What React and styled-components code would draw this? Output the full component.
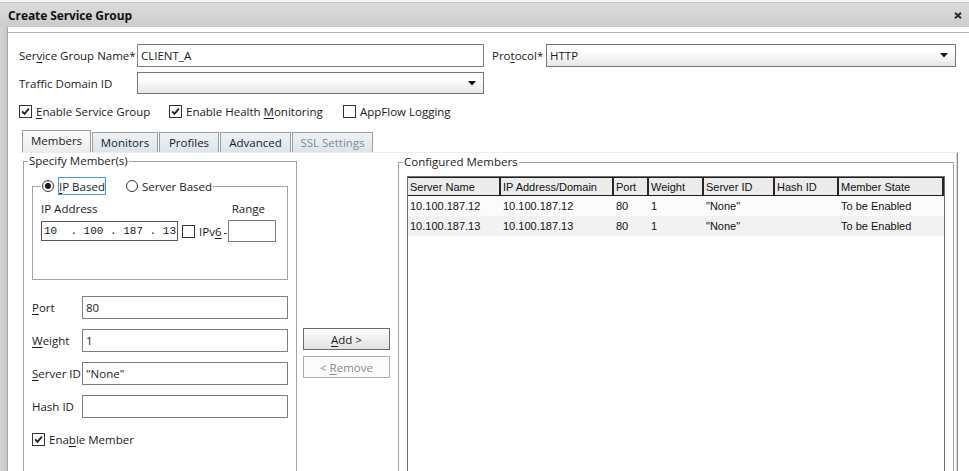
import React from 'react';
import styled, { createGlobalStyle } from 'styled-components';

const GlobalStyle = createGlobalStyle`
  html, body {
    margin: 0;
    padding: 0;
    background: #fff;
    overflow: hidden;
  }
  body {
    font-family: "Open Sans", "Noto Sans", sans-serif;
    font-size: 11.5px;
    color: #1a1a1a;
  }
  * { box-sizing: border-box; }
`;

const members = [
  { name: '10.100.187.12', ip: '10.100.187.12', port: '80', weight: '1', serverId: '"None"', hashId: '', state: 'To be Enabled' },
  { name: '10.100.187.13', ip: '10.100.187.13', port: '80', weight: '1', serverId: '"None"', hashId: '', state: 'To be Enabled' },
];

const columns = [
  { key: 'name', label: 'Server Name', w: 93 },
  { key: 'ip', label: 'IP Address/Domain', w: 113 },
  { key: 'port', label: 'Port', w: 35 },
  { key: 'weight', label: 'Weight', w: 55 },
  { key: 'serverId', label: 'Server ID', w: 71 },
  { key: 'hashId', label: 'Hash ID', w: 64 },
  { key: 'state', label: 'Member State', w: 105 },
];

const tabs = [
  { label: 'Members', w: 69, active: true },
  { label: 'Monitors', w: 66 },
  { label: 'Profiles', w: 60 },
  { label: 'Advanced', w: 71 },
  { label: 'SSL Settings', w: 81, disabled: true },
];

const Check = ({ checked }) => (
  <CheckBox>
    {checked && (
      <svg width="9" height="9" viewBox="0 0 9 9">
        <path d="M1.2 4.4 L3.5 6.9 L7.9 1.6" fill="none" stroke="#1e1e1e" strokeWidth="1.8" />
      </svg>
    )}
  </CheckBox>
);

const Arrow = () => (
  <svg width="8" height="5" viewBox="0 0 8 5">
    <path d="M0 0 H8 L4 4.6 Z" fill="#111" />
  </svg>
);

const App = () => {
  return (
    <>
      <GlobalStyle />
      <Window>
        <TopStrip />
        <TitleBar>
          <TitleText>Create Service Group</TitleText>
          <svg width="8" height="7" viewBox="0 0 8 7">
            <path d="M1 0.8 L7 6.2 M7 0.8 L1 6.2" stroke="#2b2b2b" strokeWidth="2" />
          </svg>
        </TitleBar>
        <Body>
          <SideStrip />
          <Main>
            <Sheet>
              <FieldRow h={23}>
                <FieldLabel w={118}>Ser<u>v</u>ice Group Name*</FieldLabel>
                <TextBox w={347}>CLIENT_A</TextBox>
                <FieldLabel w={54} gap={8}>Pro<u>t</u>ocol*</FieldLabel>
                <ComboBox w={410}>
                  <span>HTTP</span>
                  <Arrow />
                </ComboBox>
              </FieldRow>
              <FieldRow h={22} top={5}>
                <FieldLabel w={118}>Traffic Domain ID</FieldLabel>
                <ComboBox w={347}>
                  <span />
                  <Arrow />
                </ComboBox>
              </FieldRow>
              <CheckRow>
                <CheckItem w={150}><Check checked /><span><u>E</u>nable Service Group</span></CheckItem>
                <CheckItem w={174}><Check checked /><span>Enable Health <u>M</u>onitoring</span></CheckItem>
                <CheckItem><Check /><span>AppFlow Logging</span></CheckItem>
              </CheckRow>

              <TabStrip>
                {tabs.map(t => (
                  <Tab key={t.label} w={t.w} $active={t.active} $disabled={t.disabled}>{t.label}</Tab>
                ))}
              </TabStrip>
              <TabPanel>
                <GroupBox w={274} h={340}>
                  <GroupTitle>Specify Member(s)</GroupTitle>
                  <SubGroup>
                    <RadioLegend>
                      <Radio $on />
                      <FocusLabel><u>I</u>P Based</FocusLabel>
                      <Radio style={{ marginLeft: 16 }} />
                      <span>Server Based</span>
                    </RadioLegend>
                    <AddressHead>
                      <span>IP Address</span>
                      <span>Ran<u>g</u>e</span>
                    </AddressHead>
                    <AddressLine>
                      <IpBox>10  . 100 . 187 . 13</IpBox>
                      <Check />
                      <span>IPv<u>6</u></span>
                      <Dash>-</Dash>
                      <RangeBox />
                    </AddressLine>
                  </SubGroup>
                  <MemberForm>
                    <FormLine><FormLabel><u>P</u>ort</FormLabel><TextBox w={206} h={23}>80</TextBox></FormLine>
                    <FormLine><FormLabel><u>W</u>eight</FormLabel><TextBox w={206} h={23}>1</TextBox></FormLine>
                    <FormLine><FormLabel><u>S</u>erver ID</FormLabel><TextBox w={206} h={23}>"None"</TextBox></FormLine>
                    <FormLine><FormLabel>Hash ID</FormLabel><TextBox w={206} h={23} /></FormLine>
                    <CheckItem style={{ marginTop: 4 }}><Check checked /><span>Ena<u>b</u>le Member</span></CheckItem>
                  </MemberForm>
                </GroupBox>

                <ButtonColumn>
                  <PushButton><u>A</u>dd &gt;</PushButton>
                  <PushButton disabled>&lt; <u>R</u>emove</PushButton>
                </ButtonColumn>

                <GroupBox w={556} h={340} top={1}>
                  <GroupTitle>Configured Members</GroupTitle>
                  <ListView>
                    <HeaderRow>
                      {columns.map(c => (
                        <HeaderCell key={c.key} w={c.w}>{c.label}</HeaderCell>
                      ))}
                    </HeaderRow>
                    {members.map((m, i) => (
                      <Row key={m.name} $alt={i % 2 === 1}>
                        {columns.map(c => (
                          <Cell key={c.key} w={c.w}>{m[c.key]}</Cell>
                        ))}
                      </Row>
                    ))}
                  </ListView>
                </GroupBox>
              </TabPanel>
            </Sheet>
          </Main>
        </Body>
      </Window>
    </>
  );
};

const Window = styled.div`
  width: 969px;
  height: 471px;
  overflow: hidden;
  display: flex;
  flex-direction: column;
  background: #fff;

  u {
    text-decoration: underline;
    text-underline-offset: 2px;
  }
`;

const TopStrip = styled.div`
  flex: none;
  height: 3px;
  background: #f4f4f4;
  border-bottom: 1px solid #c4c4c4;
`;

const TitleBar = styled.div`
  flex: none;
  height: 24px;
  display: flex;
  align-items: center;
  justify-content: space-between;
  padding: 0 7px 0 8px;
  background: linear-gradient(#dcdcdc, #cbcbcb);
`;

const TitleText = styled.span`
  font-weight: 700;
  font-size: 12px;
  color: #111;
  letter-spacing: -0.1px;
`;

const Body = styled.div`
  flex: 1;
  display: flex;
  min-height: 0;
`;

const SideStrip = styled.div`
  flex: none;
  width: 8px;
  background: linear-gradient(90deg, #d6d6d6, #c8c8c8);
  border-right: 1px solid #a6a6a6;
`;

const Main = styled.div`
  flex: 1;
  padding-top: 5px;
  display: flex;
  flex-direction: column;
`;

const Sheet = styled.div`
  flex: 1;
  border-top: 1px solid #b4b4b4;
  padding: 11px 11px 0 11px;
  display: flex;
  flex-direction: column;
`;

const FieldRow = styled.div`
  display: flex;
  align-items: center;
  height: ${p => p.h}px;
  margin-top: ${p => p.top || 0}px;
`;

const FieldLabel = styled.span`
  flex: none;
  width: ${p => p.w}px;
  margin-left: ${p => p.gap || 0}px;
  white-space: nowrap;
`;

const TextBox = styled.div`
  flex: none;
  width: ${p => p.w}px;
  height: ${p => p.h || 23}px;
  border: 1px solid #7e7e7e;
  background: #fff;
  padding: 0 3px;
  display: flex;
  align-items: center;
  white-space: nowrap;
`;

const Dash = styled.span`
  margin-left: -2px;
`;

const RangeBox = styled.div`
  flex: none;
  width: 48px;
  height: 22px;
  margin-left: -3px;
  border: 1px solid #7e7e7e;
  background: #fff;
`;

const ComboBox = styled.div`
  flex: none;
  width: ${p => p.w}px;
  height: 100%;
  border: 1px solid #767676;
  background: linear-gradient(#ffffff 30%, #e6e6e6);
  padding: 0 7px 0 3px;
  display: flex;
  align-items: center;
  justify-content: space-between;
`;

const CheckRow = styled.div`
  display: flex;
  align-items: center;
  height: 14px;
  margin-top: 10px;
`;

const CheckItem = styled.label`
  flex: none;
  display: flex;
  align-items: center;
  gap: 4px;
  width: ${p => (p.w ? `${p.w}px` : 'auto')};
  white-space: nowrap;
`;

const CheckBox = styled.span`
  flex: none;
  width: 13px;
  height: 13px;
  border: 1px solid #333;
  background: #fff;
  display: flex;
  align-items: center;
  justify-content: center;
`;

const TabStrip = styled.div`
  display: flex;
  align-items: flex-end;
  height: 22px;
  margin-top: 12px;
  padding-left: 3px;
  gap: 1px;
`;

const Tab = styled.div`
  flex: none;
  width: ${p => p.w}px;
  height: ${p => (p.$active ? 22 : 20)}px;
  border: 1px solid #9c9c9c;
  border-bottom: none;
  display: flex;
  align-items: ${p => (p.$active ? 'flex-start' : 'center')};
  padding-top: ${p => (p.$active ? 2 : 0)}px;
  justify-content: center;
  color: ${p => (p.$disabled ? '#8a8a8a' : '#1a1a1a')};
  background: ${p => (p.$active
    ? 'linear-gradient(#fbfbfb, #ececec)'
    : 'linear-gradient(#eef2f5, #dde4ea)')};
`;

const TabPanel = styled.div`
  flex: 1;
  display: flex;
  align-items: flex-start;
  margin-left: 1px;
  padding: 0 0 0 3px;
  border-top: 1px solid #ececec;
  border-right: 1px solid #8c8c8c;
  box-shadow: inset -1px 0 #d8d8d8;
  overflow: hidden;
`;

const GroupBox = styled.fieldset`
  flex: none;
  margin: ${p => p.top || 0}px 0 0 0;
  padding: 0 8px;
  width: ${p => p.w}px;
  height: ${p => p.h}px;
  min-width: 0;
  border: 1px solid #a3a3a3;
`;

const GroupTitle = styled.legend`
  margin-left: -4px;
  padding: 0 1px;
  line-height: 16px;
`;

const SubGroup = styled.fieldset`
  margin: 8px 0 0 0;
  padding: 0 8px;
  height: 103px;
  min-width: 0;
  border: 1px solid #a3a3a3;
`;

const RadioLegend = styled.legend`
  padding: 0 1px;
  height: 18px;
  display: flex;
  align-items: center;
  gap: 4px;
  white-space: nowrap;
`;

const Radio = styled.span`
  flex: none;
  width: 12px;
  height: 12px;
  border-radius: 50%;
  border: 1px solid #333;
  background: #fff;
  display: flex;
  align-items: center;
  justify-content: center;

  &::after {
    content: '';
    width: 6px;
    height: 6px;
    border-radius: 50%;
    background: ${p => (p.$on ? '#1a1a1a' : 'transparent')};
  }
`;

const FocusLabel = styled.span`
  height: 18px;
  padding: 0;
  border: 1px solid #3c9bf0;
  display: flex;
  align-items: center;
`;

const AddressHead = styled.div`
  display: flex;
  justify-content: space-between;
  margin-top: 7px;
  padding-right: 14px;
  line-height: 14px;
`;

const AddressLine = styled.div`
  display: flex;
  align-items: center;
  gap: 4px;
  margin-top: 4px;
`;

const IpBox = styled.div`
  flex: none;
  width: 137px;
  height: 20px;
  border: 1px solid #555;
  padding: 0 2px;
  font-family: "Liberation Mono", monospace;
  font-size: 11px;
  white-space: pre;
  display: flex;
  align-items: center;
`;

const MemberForm = styled.div`
  display: flex;
  flex-direction: column;
  gap: 10px;
  margin-top: 16px;
`;

const FormLine = styled.div`
  display: flex;
  align-items: center;
`;

const FormLabel = styled.span`
  flex: none;
  width: 50px;
  white-space: nowrap;
`;

const ButtonColumn = styled.div`
  flex: none;
  width: 101px;
  padding: 175px 0 0 6px;
  display: flex;
  flex-direction: column;
  gap: 6px;
`;

const PushButton = styled.button`
  width: 87px;
  height: 22px;
  padding: 0;
  font: inherit;
  color: ${p => (p.disabled ? '#8a8a8a' : '#1a1a1a')};
  border: 1px solid ${p => (p.disabled ? '#adadad' : '#6a6a6a')};
  background: ${p => (p.disabled ? '#fbfbfb' : 'linear-gradient(#fdfdfd, #e2e2e2)')};
`;

const ListView = styled.div`
  margin-top: 6px;
  height: 300px;
  border: 1px solid #6e6e6e;
  font-family: "Liberation Sans", Arial, sans-serif;
  font-size: 11px;
  color: #111;
`;

const HeaderRow = styled.div`
  display: flex;
  height: 19px;
  background: #ebebeb;
  border-top: 1px solid #1f1f1f;
  border-bottom: 1px solid #1f1f1f;
`;

const HeaderCell = styled.div`
  flex: none;
  width: ${p => p.w}px;
  padding-left: 2px;
  display: flex;
  align-items: center;
  border-right: 2px solid #262626;
  white-space: nowrap;
  overflow: hidden;
`;

const Row = styled.div`
  display: flex;
  height: 20px;
  background: ${p => (p.$alt ? '#f2f2f2' : '#fbfbfb')};
`;

const Cell = styled.div`
  flex: none;
  width: ${p => p.w}px;
  padding-left: 2px;
  display: flex;
  align-items: center;
  white-space: nowrap;
  overflow: hidden;
`;

export default App;
